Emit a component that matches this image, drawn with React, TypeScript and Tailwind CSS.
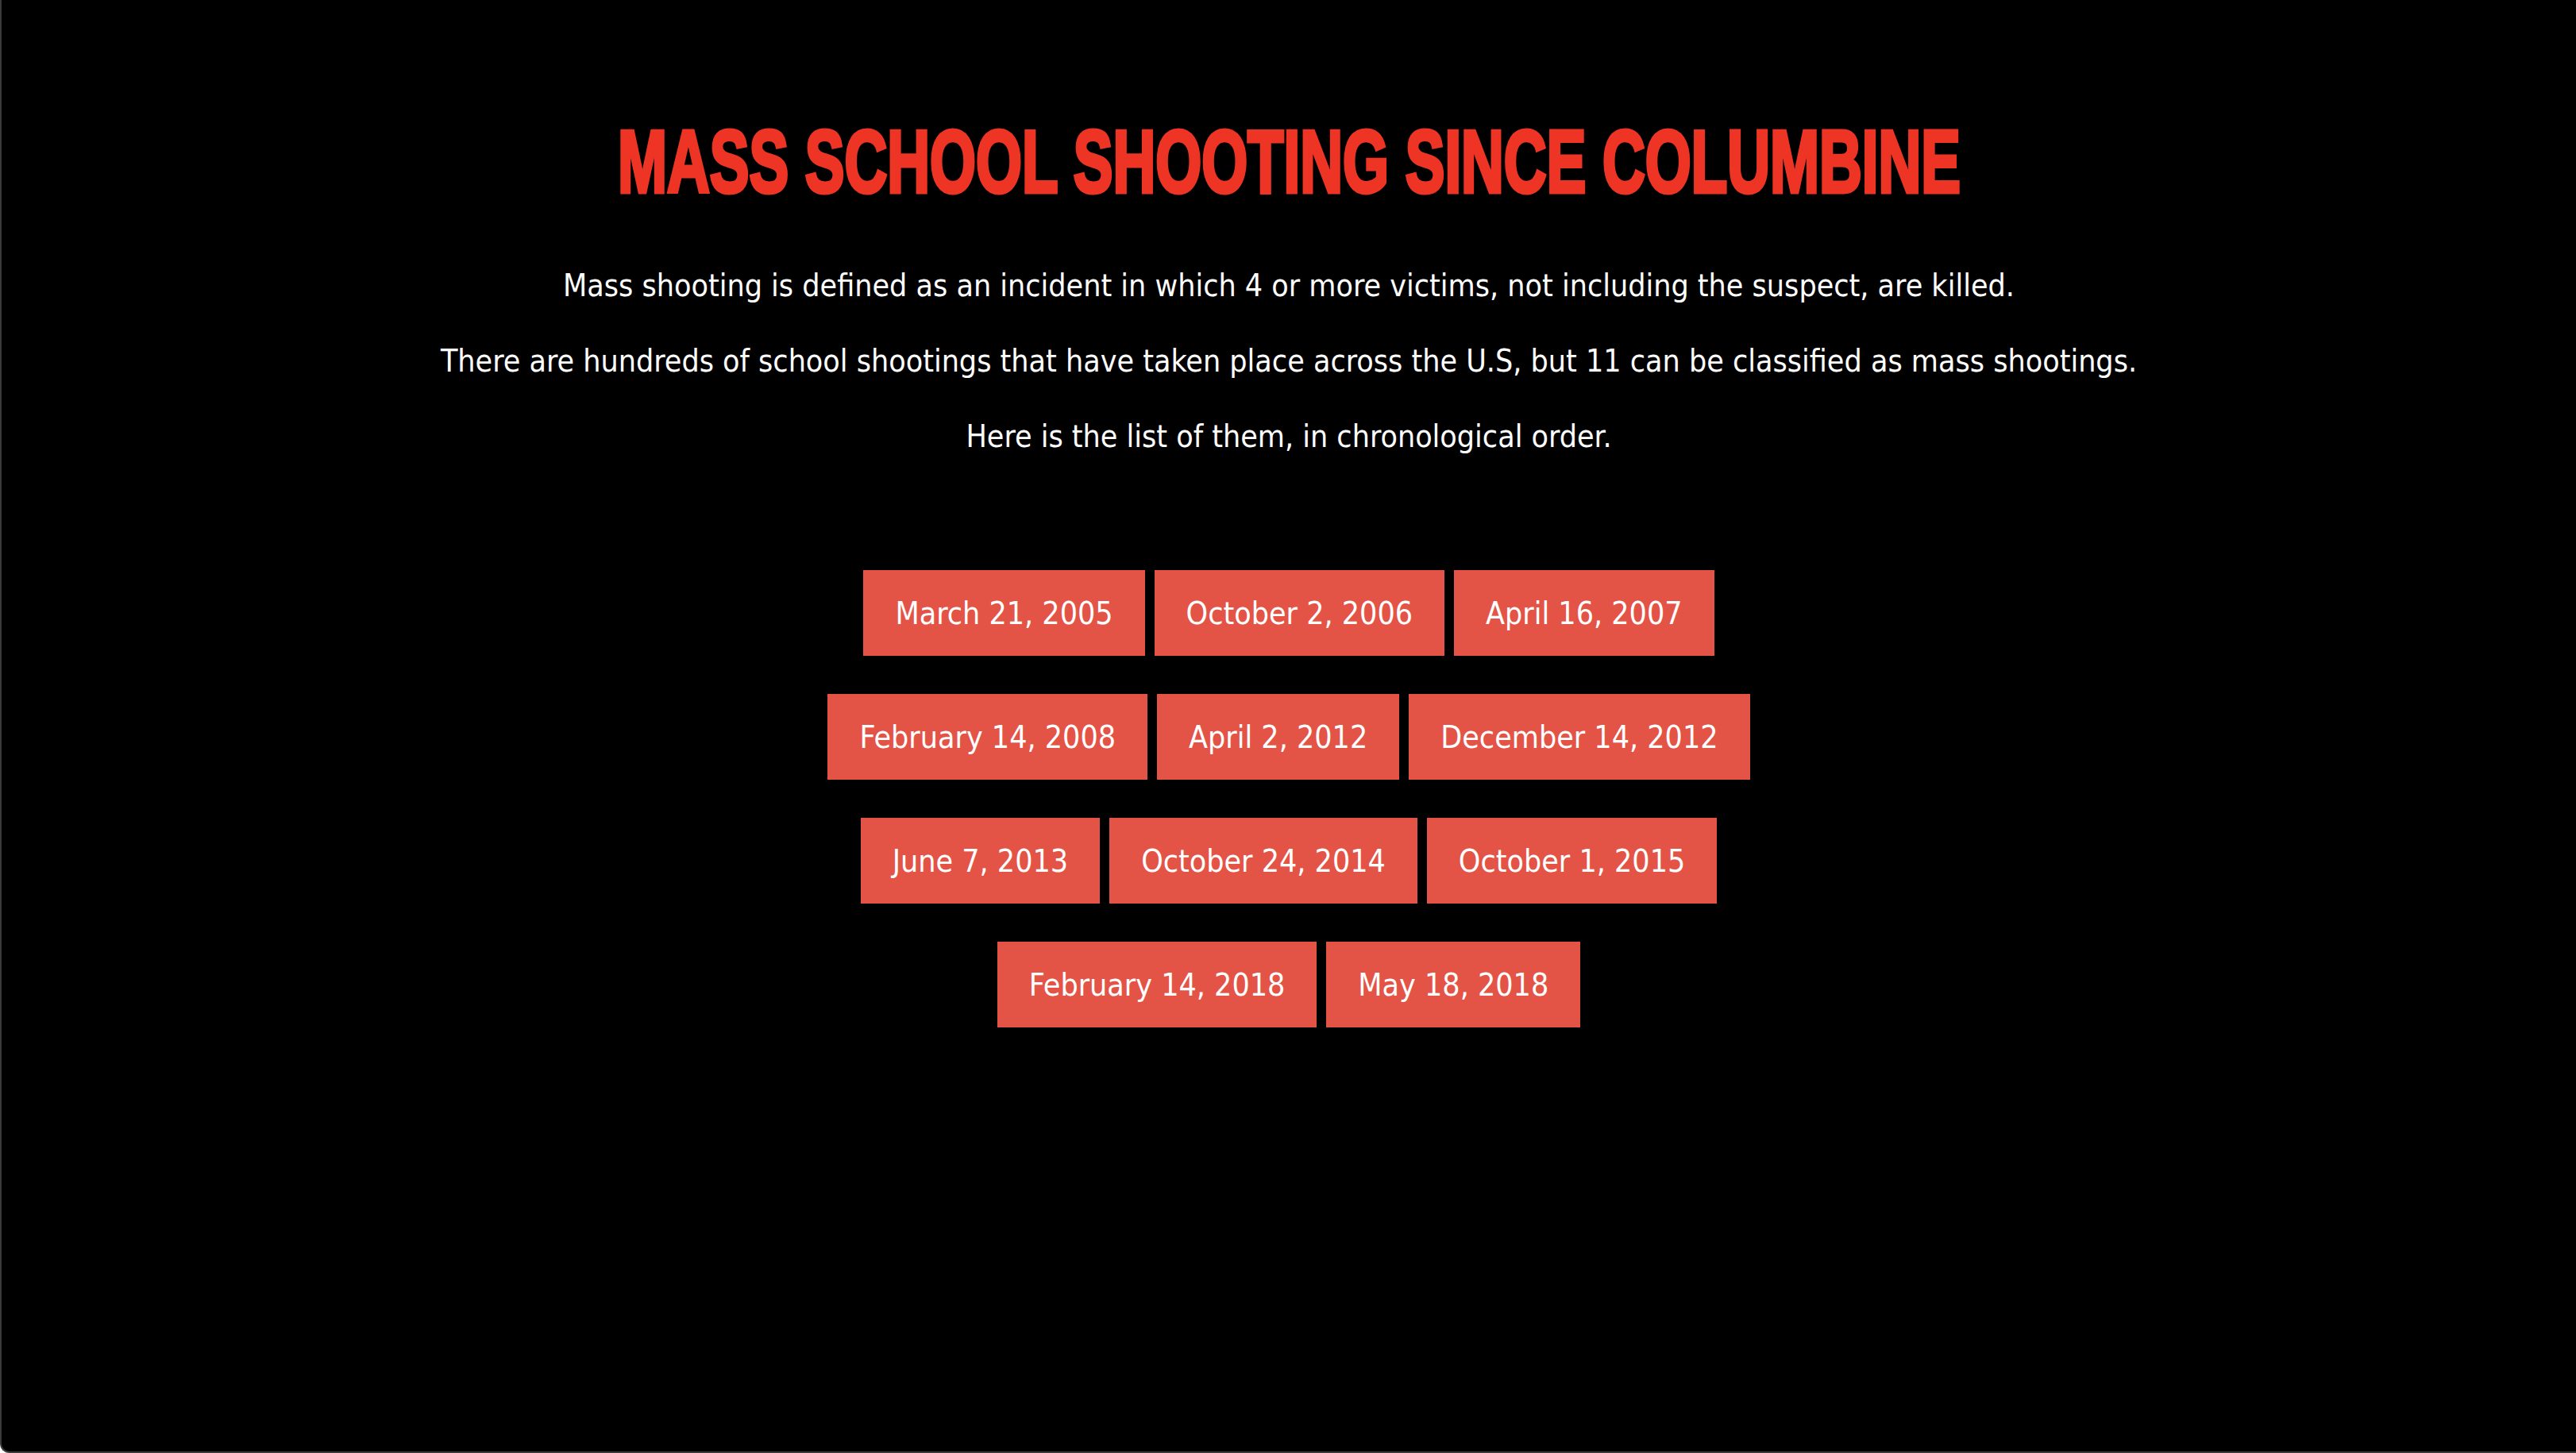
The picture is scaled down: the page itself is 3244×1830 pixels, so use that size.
import type { FC } from 'react';

const rows: string[][] = [
  ['March 21, 2005', 'October 2, 2006', 'April 16, 2007'],
  ['February 14, 2008', 'April 2, 2012', 'December 14, 2012'],
  ['June 7, 2013', 'October 24, 2014', 'October 1, 2015'],
  ['February 14, 2018', 'May 18, 2018'],
];

const bodyFont =
  "font-['DejaVu_Sans_Condensed','DejaVu_Sans',sans-serif] font-stretch-condensed";

/**
 * DateButton
 * @param label date shown on the tile
 */
const DateButton: FC<{ label: string }> = ({ label }) => (
  <button
    className={`${bodyFont} h-[108px] bg-[#e35446] px-[40px] text-[39px] leading-none text-white`}
  >
    {label}
  </button>
);

const App: FC = () => {
  return (
    <div className="h-[1830px] w-full overflow-hidden rounded-bl-[12px] border-b-2 border-l-2 border-[#3a3a3a] bg-black">
      <div className="flex flex-col items-center">
        <h1 className="mt-[136px] flex h-[136px] items-center justify-center">
          <span className="inline-block scale-x-[0.665] whitespace-nowrap font-['Impact','Liberation_Sans_Narrow',sans-serif] text-[112px] font-bold leading-none text-[#ee3424] [-webkit-text-stroke:5px_#ee3424]">
            MASS SCHOOL SHOOTING SINCE COLUMBINE
          </span>
        </h1>

        <div
          className={`${bodyFont} mt-[66px] flex flex-col items-center gap-[51px] text-[39px] leading-[44px] text-white`}
        >
          <p>
            Mass shooting is defined as an incident in which 4 or more victims,
            not including the suspect, are killed.
          </p>
          <p>
            There are hundreds of school shootings that have taken place across
            the U.S, but 11 can be classified as mass shootings.
          </p>
          <p>Here is the list of them, in chronological order.</p>
        </div>

        <div className="mt-[146px] flex flex-col items-center gap-[48px]">
          {rows.map((row, index) => (
            <div key={index} className="flex justify-center gap-[12px]">
              {row.map((label) => (
                <DateButton key={label} label={label} />
              ))}
            </div>
          ))}
        </div>
      </div>
    </div>
  );
};

export default App;
